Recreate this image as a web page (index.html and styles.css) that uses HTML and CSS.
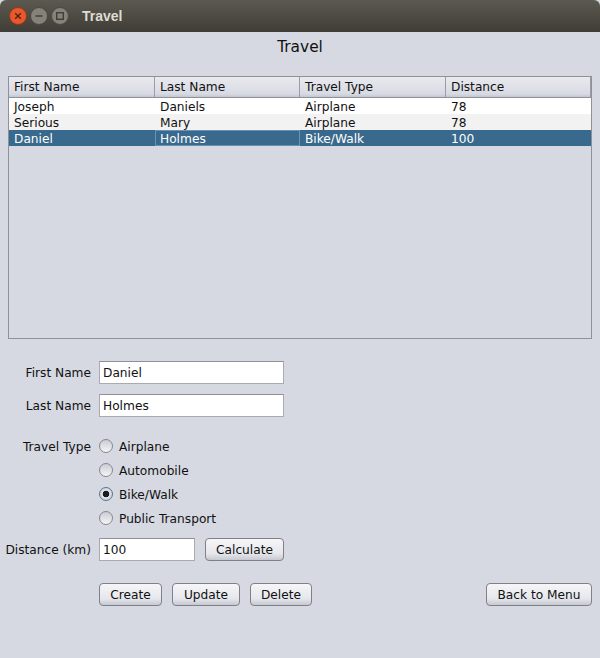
FILE: index.html
```html
<!DOCTYPE html>
<html lang="en">
<head>
    <meta charset="UTF-8">
    <title>Travel</title>
    <link rel="stylesheet" href="styles.css">
</head>
<body>
    <div class="titlebar">
        <div class="win-buttons">
            <svg class="win-btn" width="18" height="18" viewBox="0 0 18 18">
                <circle cx="9" cy="9" r="8.5" fill="#e9572b" stroke="#8f3a1e"/>
                <path d="M6.2 6.2l5.6 5.6M11.8 6.2l-5.6 5.6" stroke="#4a2015" stroke-width="1.3"/>
            </svg>
            <svg class="win-btn" width="18" height="18" viewBox="0 0 18 18">
                <circle cx="9" cy="9" r="8.5" fill="#85827a" stroke="#4a4840"/>
                <path d="M5.5 9h7" stroke="#3c3a34" stroke-width="1.4"/>
            </svg>
            <svg class="win-btn" width="18" height="18" viewBox="0 0 18 18">
                <circle cx="9" cy="9" r="8.5" fill="#85827a" stroke="#4a4840"/>
                <rect x="5.7" y="5.7" width="6.6" height="6.6" fill="none" stroke="#3c3a34" stroke-width="1.3"/>
            </svg>
        </div>
        <span class="win-title">Travel</span>
    </div>

    <div class="content">
        <h1>Travel</h1>

        <div class="table-box">
            <div class="row header">
                <div class="cell">First Name</div>
                <div class="cell">Last Name</div>
                <div class="cell">Travel Type</div>
                <div class="cell">Distance</div>
            </div>
            <div class="row">
                <div class="cell">Joseph</div>
                <div class="cell">Daniels</div>
                <div class="cell">Airplane</div>
                <div class="cell">78</div>
            </div>
            <div class="row alt">
                <div class="cell">Serious</div>
                <div class="cell">Mary</div>
                <div class="cell">Airplane</div>
                <div class="cell">78</div>
            </div>
            <div class="row selected">
                <div class="cell">Daniel</div>
                <div class="cell focus">Holmes</div>
                <div class="cell">Bike/Walk</div>
                <div class="cell">100</div>
            </div>
        </div>

        <form class="form">
            <div class="form-row name-first">
                <label class="form-label" for="firstName">First Name</label>
                <input class="field wide" id="firstName" type="text" value="Daniel">
            </div>
            <div class="form-row name-last">
                <label class="form-label" for="lastName">Last Name</label>
                <input class="field wide" id="lastName" type="text" value="Holmes">
            </div>

            <div class="type-group">
                <div class="radio-row">
                    <span class="form-label">Travel Type</span>
                    <span class="radio"></span><span>Airplane</span>
                </div>
                <div class="radio-row">
                    <span class="form-label"></span>
                    <span class="radio"></span><span>Automobile</span>
                </div>
                <div class="radio-row">
                    <span class="form-label"></span>
                    <span class="radio checked"></span><span>Bike/Walk</span>
                </div>
                <div class="radio-row">
                    <span class="form-label"></span>
                    <span class="radio"></span><span>Public Transport</span>
                </div>
            </div>

            <div class="form-row distance">
                <label class="form-label" for="distance">Distance (km)</label>
                <input class="field narrow" id="distance" type="text" value="100">
                <button class="btn calc" type="button">Calculate</button>
            </div>

            <div class="actions">
                <div class="actions-left">
                    <button class="btn create" type="button">Create</button>
                    <button class="btn update" type="button">Update</button>
                    <button class="btn delete" type="button">Delete</button>
                </div>
                <button class="btn back" type="button">Back to Menu</button>
            </div>
        </form>
    </div>
</body>
</html>
```

FILE: styles.css
```css
* {
    box-sizing: border-box;
}
html, body {
    height: 100%;
}
body {
    margin: 0;
    background-color: #d6d9e2;
    color: #111111;
    font-family: "DejaVu Sans", sans-serif;
    font-size: 12.2px;
    overflow: hidden;
}
.titlebar {
    display: flex;
    align-items: center;
    height: 32px;
    padding-left: 9px;
    background: linear-gradient(#5c5950, #3f3d37);
    border-radius: 6px 6px 0 0;
}
.win-buttons {
    display: flex;
    gap: 3px;
}
.win-title {
    margin-left: 13px;
    color: #dfdbd2;
    font-family: "Liberation Sans", sans-serif;
    font-size: 14px;
    font-weight: bold;
}
.content {
    padding: 0 8px;
}
h1 {
    margin: 0;
    height: 44px;
    padding-top: 6px;
    text-align: center;
    font-size: 15.4px;
    font-weight: normal;
    line-height: 18px;
}
.table-box {
    height: 263px;
    border: 1px solid #8e9198;
}
.row {
    display: grid;
    grid-template-columns: 146px 145px 146px 1fr;
    grid-template-rows: 16px;
    height: 16px;
    background: #ffffff;
    line-height: 18px;
}
.row.alt {
    background: #f2f2f3;
}
.row.selected {
    background: #39698c;
    color: #ffffff;
}
.row.header {
    grid-template-rows: 20px;
    height: 21px;
    background: linear-gradient(#e9eaef, #d8dae3 85%, #c4c6d0);
    border-bottom: 1px solid #8e9198;
    line-height: 21px;
}
.cell {
    padding-left: 5px;
    overflow: hidden;
}
.header .cell {
    border-right: 1px solid #9a9ca5;
}
.cell.focus {
    border: 1px solid #6692b8;
    padding-left: 4px;
    line-height: 16px;
}
.form {
    margin-left: -8px;
    margin-right: -8px;
    padding-top: 22px;
}
.form-row {
    display: flex;
    align-items: center;
}
.form-label {
    width: 91px;
    flex: none;
    text-align: right;
}
.field {
    height: 23px;
    margin: 0 0 0 8px;
    padding: 0 3px;
    border: 1px solid #a9abb0;
    border-top-color: #8f9196;
    background: #ffffff;
    color: #111111;
    font: inherit;
}
.wide {
    width: 185px;
}
.narrow {
    width: 96px;
}
.name-last {
    margin-top: 10px;
}
.type-group {
    margin-top: 17px;
}
.radio-row {
    display: flex;
    align-items: center;
    height: 24px;
    padding-top: 2px;
}
.radio {
    width: 14px;
    height: 14px;
    margin: 0 6px 2px 8px;
    flex: none;
    border: 1px solid #85878e;
    border-radius: 50%;
    background: linear-gradient(#c9ccd4, #f4f5f7);
}
.radio.checked {
    background: radial-gradient(circle, #1c1c1c 0, #1c1c1c 3px, #dfe3ea 3.6px, #b9c6d6 100%);
    border-color: #5f7488;
}
.distance {
    margin-top: 8px;
}
.btn {
    height: 23px;
    padding: 0;
    border: 1px solid #7f8188;
    border-radius: 4px;
    background: linear-gradient(#f6f6f8, #e6e7ec 70%, #c6c8d1);
    color: #111111;
    font: inherit;
}
.calc {
    width: 79px;
    margin-left: 10px;
}
.actions {
    display: flex;
    justify-content: space-between;
    margin-top: 22px;
    padding: 0 8px 0 99px;
}
.actions-left {
    display: flex;
    gap: 10px;
}
.create {
    width: 63px;
}
.update {
    width: 68px;
}
.delete {
    width: 62px;
}
.back {
    width: 106px;
}
```
